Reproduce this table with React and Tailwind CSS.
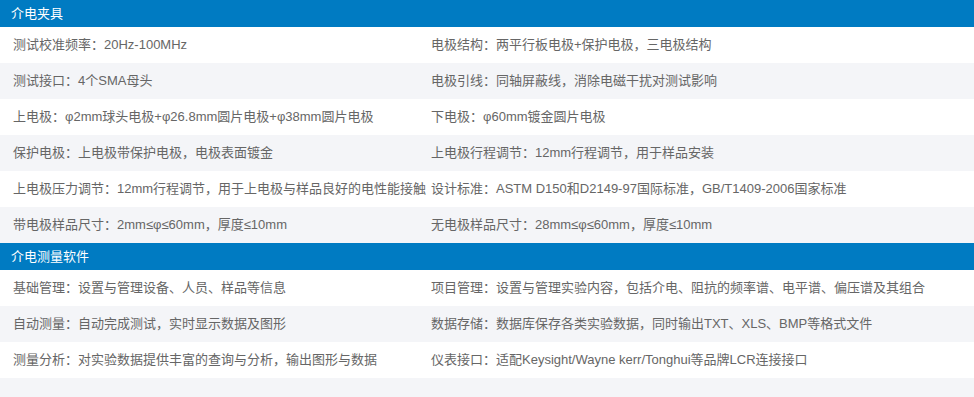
import React from "react";

const sections = [
  {
    title: "介电夹具",
    rows: [
      ["测试校准频率：20Hz-100MHz", "电极结构：两平行板电极+保护电极，三电极结构"],
      ["测试接口：4个SMA母头", "电极引线：同轴屏蔽线，消除电磁干扰对测试影响"],
      ["上电极：φ2mm球头电极+φ26.8mm圆片电极+φ38mm圆片电极", "下电极：φ60mm镀金圆片电极"],
      ["保护电极：上电极带保护电极，电极表面镀金", "上电极行程调节：12mm行程调节，用于样品安装"],
      ["上电极压力调节：12mm行程调节，用于上电极与样品良好的电性能接触", "设计标准：ASTM D150和D2149-97国际标准，GB/T1409-2006国家标准"],
      ["带电极样品尺寸：2mm≤φ≤60mm，厚度≤10mm", "无电极样品尺寸：28mm≤φ≤60mm，厚度≤10mm"],
    ],
  },
  {
    title: "介电测量软件",
    rows: [
      ["基础管理：设置与管理设备、人员、样品等信息", "项目管理：设置与管理实验内容，包括介电、阻抗的频率谱、电平谱、偏压谱及其组合"],
      ["自动测量：自动完成测试，实时显示数据及图形", "数据存储：数据库保存各类实验数据，同时输出TXT、XLS、BMP等格式文件"],
      ["测量分析：对实验数据提供丰富的查询与分析，输出图形与数据", "仪表接口：适配Keysight/Wayne kerr/Tonghui等品牌LCR连接接口"],
      ["", ""],
    ],
  },
];

export default function App() {
  return (
    <div
      className="w-[974px] h-[397px] overflow-hidden bg-white text-[13px]"
      style={{ fontFamily: '"Liberation Sans", "Noto Sans CJK SC", sans-serif' }}
    >
      {sections.map((s) => (
        <div key={s.title}>
          <div className="h-[27px] bg-[#007bc2] text-white flex items-center px-[11px]">{s.title}</div>
          {s.rows.map((r, i) => (
            <div
              key={i}
              className={
                "grid grid-cols-[418px_1fr] h-[36px] items-center text-[#666] " +
                (i % 2 === 1 ? "bg-[#f4f5f8]" : "bg-white")
              }
            >
              <div className="px-[13px] whitespace-nowrap">{r[0]}</div>
              <div className="px-[13px] whitespace-nowrap">{r[1]}</div>
            </div>
          ))}
        </div>
      ))}
    </div>
  );
}
